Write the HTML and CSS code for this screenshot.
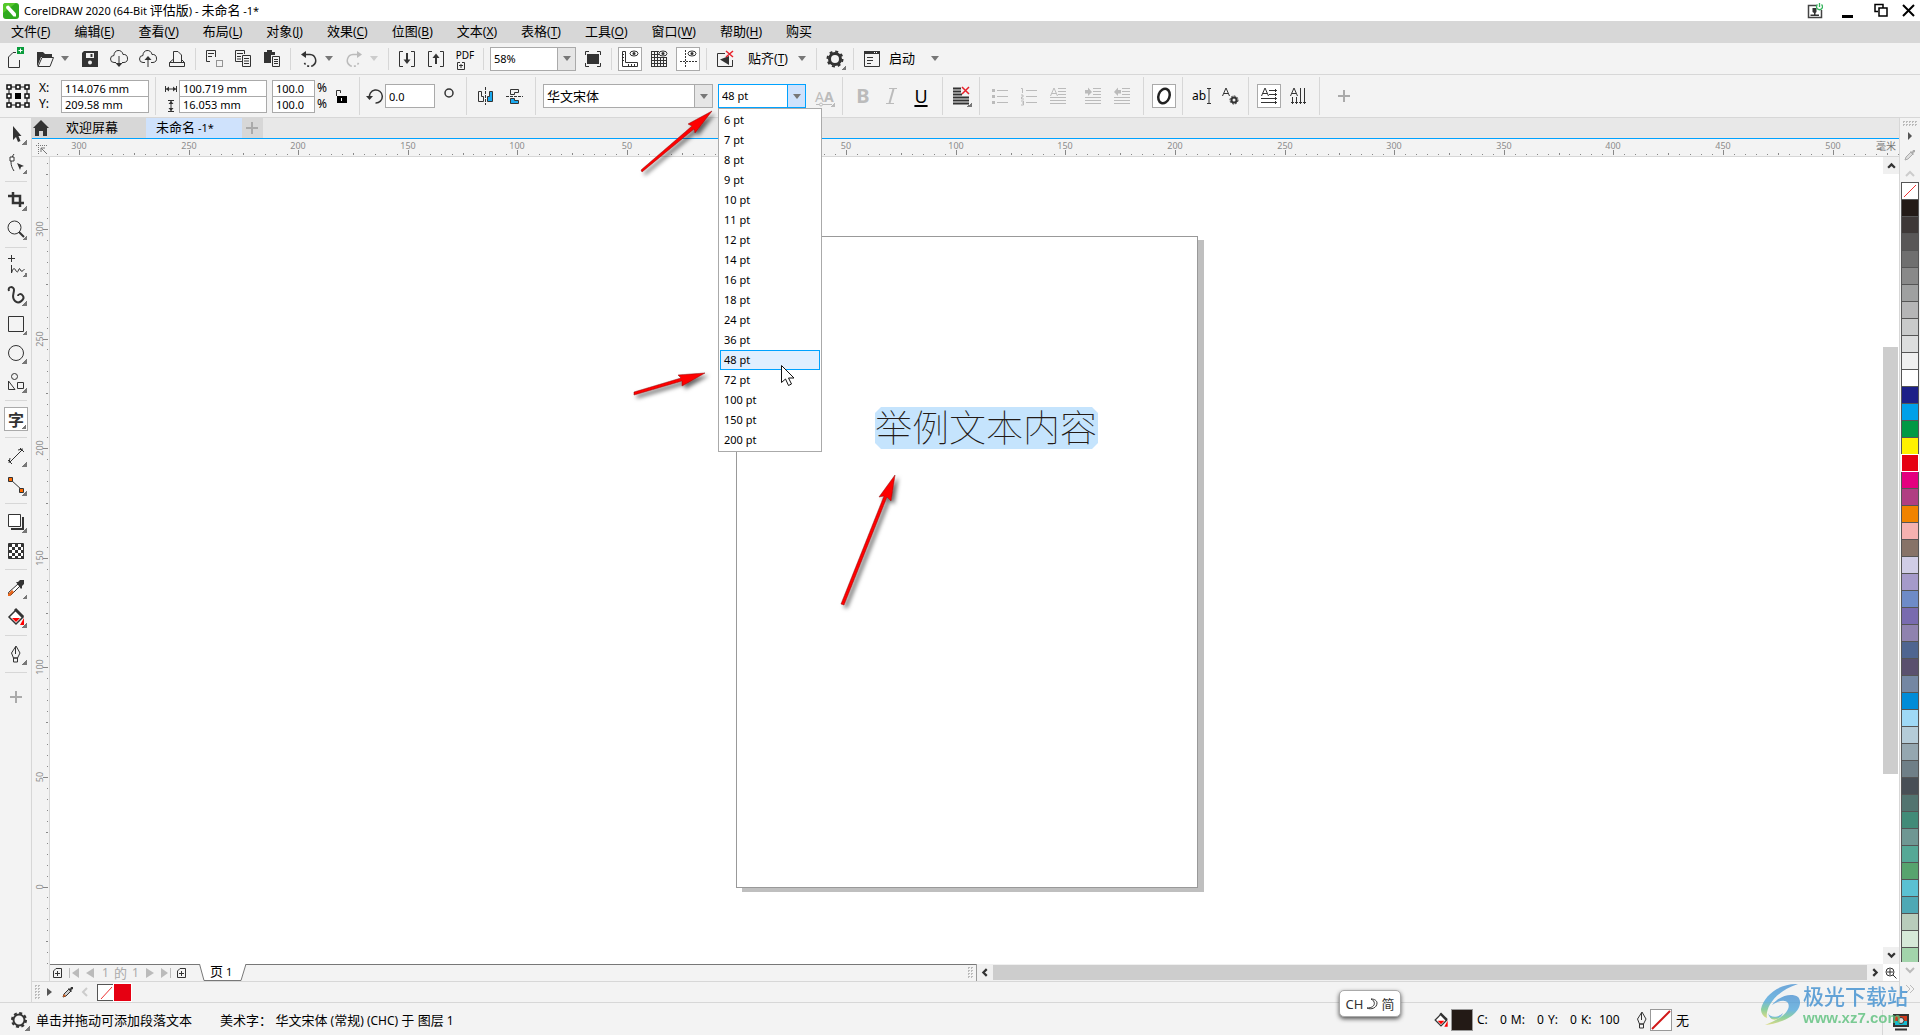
FILE: index.html
```html
<!DOCTYPE html>
<html lang="zh-CN">
<head>
<meta charset="utf-8">
<title>CorelDRAW 2020 (64-Bit 评估版) - 未命名 -1*</title>
<link rel="stylesheet" href="styles.css">
</head>
<body>
<header class="titlebar">
  <svg class="app-logo" viewBox="0 0 16 16"><rect width="16" height="16" rx="3" fill="#2faa1e"/><path d="M0 10V3a3 3 0 0 1 3-3h10z" fill="#55c82a"/><path d="M3.500 3l2-.5L13 10.500v3h-2.500L3 5z" fill="#fff"/></svg>
  <h1 class="title">CorelDRAW 2020 (64-Bit <span class="zh">评估版</span>) - <span class="zh">未命名</span> -1*</h1>
  <div class="window-buttons">
    <button class="wb" aria-label="账户"><svg viewBox="0 0 16 16"><path d="M10 2.500H1.500v12h13V7" fill="none" stroke="#444" stroke-width="1.500"/><path d="M5.500 5h4v4l-1 1v1.500h3.500V13H3.500v-1.500H7V10L5.500 9z" fill="#333"/><path d="M10.500 1.500a3 3 0 1 0 4 0M12.500 0v4" fill="none" stroke="#35b35c" stroke-width="1.300"/></svg></button>
    <button class="wb" aria-label="最小化"><svg viewBox="0 0 16 16"><path d="M2 12h11v3H2z" fill="#000"/></svg></button>
    <button class="wb" aria-label="还原"><svg viewBox="0 0 16 16"><path d="M5 8.500H2V1.500h8v3M6 5h8v8H6z" fill="none" stroke="#000" stroke-width="1.500"/></svg></button>
    <button class="wb close" aria-label="关闭"><svg viewBox="0 0 16 16"><path d="M2 2l11 11M13 2L2 13" fill="none" stroke="#000" stroke-width="2"/></svg></button>
  </div>
</header>

<nav class="menubar">
  <button><span class="zh">文件</span>(<u>F</u>)</button>
  <button><span class="zh">编辑</span>(<u>E</u>)</button>
  <button><span class="zh">查看</span>(<u>V</u>)</button>
  <button><span class="zh">布局</span>(<u>L</u>)</button>
  <button><span class="zh">对象</span>(<u>J</u>)</button>
  <button><span class="zh">效果</span>(<u>C</u>)</button>
  <button><span class="zh">位图</span>(<u>B</u>)</button>
  <button><span class="zh">文本</span>(<u>X</u>)</button>
  <button><span class="zh">表格</span>(<u>T</u>)</button>
  <button><span class="zh">工具</span>(<u>O</u>)</button>
  <button><span class="zh">窗口</span>(<u>W</u>)</button>
  <button><span class="zh">帮助</span>(<u>H</u>)</button>
  <button><span class="zh">购买</span></button>
</nav>

<div class="toolbar" role="toolbar" aria-label="标准">
  <button class="ib" aria-label="新建"><svg viewBox="0 0 24 24"><path d="M12 5.500H9L4.500 10v10.500h11V13" class="s"/><path d="M13 0h7v7h-7z" fill="#0a9c3c"/><path d="M16.500 1.500v4M14.500 3.500h4" stroke="#fff"/></svg></button>
  <button class="ib" aria-label="打开"><svg viewBox="0 0 24 24"><path d="M4 20V5h6l2 2h7v3H8L4 20" class="f"/><path d="M9 10.500h11.500L17 19.500H5z" fill="#f3f3f3" stroke="#333"/></svg></button>
  <button class="caret" aria-label="最近的文档"></button>
  <button class="ib" aria-label="保存"><svg viewBox="0 0 24 24"><path d="M4 6l2-2h14v16H4z" class="f"/><path d="M8 6h8v5H8z" fill="#f3f3f3"/><path d="M13.500 7v3" class="s2"/><circle cx="12" cy="15.500" r="2" fill="#f3f3f3"/></svg></button>
  <button class="ib" aria-label="从云下载"><svg viewBox="0 0 24 24"><path d="M9 15.500H7a3.500 3.500 0 0 1 0-7 4.500 4.500 0 0 1 9-1 4 4 0 0 1 1 8h-2M12 9v10" class="s"/><path d="M8.500 16h7L12 20z" class="f"/></svg></button>
  <button class="ib" aria-label="上传到云"><svg viewBox="0 0 24 24"><path d="M9 15.500H7a3.500 3.500 0 0 1 0-7 4.500 4.500 0 0 1 9-1 4 4 0 0 1 1 8h-2M12 12v8" class="s"/><path d="M8.500 13h7L12 9z" class="f"/></svg></button>
  <button class="ib" aria-label="打印"><svg viewBox="0 0 24 24"><path d="M8.500 15V4.500H13l3.500 3.500v7M8 12.500l-3.500 3v4h15v-4l-3-3M4.500 15.500h15" class="s"/></svg></button>
  <i class="sep"></i>
  <button class="ib" aria-label="剪切"><svg viewBox="0 0 24 24"><path d="M8 14.500H4.500v-11h9V10M6 6.500h6M6 9.500h4" class="s"/><path d="M14.500 13.500h6v6h-6z" class="s" stroke-dasharray="1 1"/></svg></button>
  <button class="ib" aria-label="复制"><svg viewBox="0 0 24 24"><path d="M11 14.500H4.500v-11h9V7M6 6.500h6M6 9.500h4M6 12h4M11.500 8.500h8v11h-8zM13 11.500h5M13 14h5M13 16.500h5" class="s"/></svg></button>
  <button class="ib" aria-label="粘贴"><svg viewBox="0 0 24 24"><path d="M4 5h3V3h5v2h3v3h-4v8H4z" class="f"/><path d="M12.500 9.500h7v10h-7zM14 12.500h4M14 14.500h4M14 16.500h4" class="s"/></svg></button>
  <i class="sep"></i>
  <button class="ib" aria-label="撤消"><svg viewBox="0 0 24 24"><path d="M8 7.500h5a6 6 0 0 1 3 11" class="s15"/><path d="M16 18.500a6 6 0 0 1-9-4" class="s15" stroke-dasharray="2 2"/><path d="M9 4v7L4 7.500z" class="f"/></svg></button>
  <button class="caret" aria-label="撤消列表"></button>
  <button class="ib off" aria-label="重做" disabled><svg viewBox="0 0 24 24"><path d="M16 7.500h-5a6 6 0 0 0-3 11" class="s15"/><path d="M8 18.500a6 6 0 0 0 9-4" class="s15" stroke-dasharray="2 2"/><path d="M15 4v7l5-3.500z" class="f"/></svg></button>
  <button class="caret off" aria-label="重做列表" disabled></button>
  <i class="sep"></i>
  <button class="ib" aria-label="导入"><svg viewBox="0 0 24 24"><path d="M8 4.500H4.500v15H8M16 4.500h3.500v15H16" class="s"/><path d="M12 6v9" class="s2"/><path d="M8.500 12.500h7L12 17z" class="f"/></svg></button>
  <button class="ib" aria-label="导出"><svg viewBox="0 0 24 24"><path d="M8 4.500H4.500v15H8M16 4.500h3.500v15H16" class="s"/><path d="M12 9v8" class="s2"/><path d="M8.500 11h7L12 6.500z" class="f"/></svg></button>
  <button class="ib pdf" aria-label="发布为 PDF"><span>PDF</span><svg viewBox="0 0 24 12"><path d="M7 2.500H4.500v7h7v-7H9" class="s"/><path d="M8 4v4M6 5.500h4" class="s"/></svg></button>
  <i class="sep"></i>
  <div class="combo zoom-combo"><select aria-label="缩放级别"><option>58%</option><option>100%</option></select><i class="arrow"></i></div>
  <button class="ib" aria-label="全屏预览"><svg viewBox="0 0 24 24"><path d="M6 7h12v10H6z" class="f"/><path d="M8 4.500H4.500V8M16 4.500h3.500V8M8 19.500H4.500V16M16 19.500h3.500V16" class="s"/></svg></button>
  <i class="sep"></i>
  <button class="ib on" aria-label="显示标尺"><svg viewBox="0 0 24 24"><path d="M4.500 4.500h3v11h12v4h-15zM5 7.500h1M5 10.500h1M5 13.500h1M10.500 17v2M13.500 17v2M16.500 17v2" class="s"/><ellipse cx="16" cy="6.500" rx="4" ry="2.500" class="s"/><circle cx="16" cy="6.500" r="1.500" class="f"/></svg></button>
  <button class="ib" aria-label="显示网格"><svg viewBox="0 0 24 24"><path d="M4.500 4v16M7.500 4v16M10.500 4v16M13.500 10v10M16.500 10v10M19.500 11v9M4 4.500h8M4 7.500h8M4 10.500h16M4 13.500h16M4 16.500h16M4 19.500h16" class="s"/><ellipse cx="16" cy="6.500" rx="4" ry="2.500" class="s"/><circle cx="16" cy="6.500" r="1.500" class="f"/></svg></button>
  <button class="ib on" aria-label="显示辅助线"><svg viewBox="0 0 24 24"><path d="M9.500 3v18M4 14.500h17" class="s" stroke-dasharray="2 1"/><ellipse cx="16" cy="6.500" rx="4" ry="2.500" class="s"/><circle cx="16" cy="6.500" r="1.500" class="f"/></svg></button>
  <i class="sep"></i>
  <button class="ib" aria-label="贴齐关闭"><svg viewBox="0 0 24 24"><path d="M12 6.500H4.500v13h15V13" class="s"/><path d="M16 9v9l-9-5.500z" class="f"/><path d="M13 4l7 6M20 4l-7 6" stroke="#e8202a" stroke-width="1.500"/></svg></button>
  <button class="text-btn snap"><span class="zh">贴齐</span>(<u>T</u>)</button>
  <button class="caret" aria-label="贴齐选项"></button>
  <i class="sep"></i>
  <button class="ib fly" aria-label="选项"><svg viewBox="0 0 24 24"><circle cx="12" cy="12" r="5.500" fill="none" stroke="#333" stroke-width="3"/><circle cx="12" cy="12" r="7.500" fill="none" stroke="#333" stroke-width="2" stroke-dasharray="3 2.890"/></svg></button>
  <i class="sep"></i>
  <button class="ib" aria-label="启动窗口"><svg viewBox="0 0 24 24"><path d="M4.500 4.500h15v15h-15z" class="s"/><path d="M4 4h16v3H4z" class="f"/><path d="M14 5.500h4" stroke="#fff" stroke-dasharray="1 1"/><path d="M7 10.500h6M7 13.500h6M7 16.500h4" class="s"/></svg></button>
  <button class="text-btn launch"><span class="zh">启动</span></button>
  <button class="caret" aria-label="启动列表"></button>
</div>

<div class="toolbar props" role="toolbar" aria-label="属性栏">
  <button class="ib origin" aria-label="对象原点"><svg viewBox="0 0 26 26"><path d="M4 4h18v18H4z" fill="none" stroke="#111"/><g fill="#fff" stroke="#111" stroke-width="1.500"><path d="M2 2h4v4H2zM11 2h4v4h-4zM20 2h4v4h-4zM2 11h4v4H2zM20 11h4v4h-4zM2 20h4v4H2zM11 20h4v4h-4zM20 20h4v4h-4z"/></g><path d="M10 10h6v6h-6z"/></svg></button>
  <div class="labels"><label for="x">X:</label><label for="y">Y:</label></div>
  <div class="pair"><input id="x" value="114.076 mm"><input id="y" value="209.58 mm"></div>
  <i class="sep"></i>
  <div class="dims">
    <svg viewBox="0 0 14 33"><path d="M1.500 6v6M12.500 6v6M2 9h10M4 20.500h6M4 31.500h6M7 21v10" stroke="#333" fill="none"/><path d="M2 9l3-2.500v5zM12 9L9 6.500v5zM7 21l2.500 3h-5zM7 31l2.500-3h-5z" class="f"/></svg>
  </div>
  <div class="pair"><input aria-label="宽度" value="100.719 mm"><input aria-label="高度" value="16.053 mm"></div>
  <div class="pair narrow"><input aria-label="水平缩放" value="100.0"><input aria-label="垂直缩放" value="100.0"></div>
  <div class="labels percent"><span>%</span><span>%</span></div>
  <button class="ib lock" aria-label="锁定比率"><svg viewBox="0 0 24 24"><path d="M7.500 12V6.500h4V9" class="s"/><path d="M8 12h10v7H8z" fill="#000"/><path d="M12.500 14v3" stroke="#fff"/></svg></button>
  <i class="sep"></i>
  <label class="rotate" for="rot"><svg viewBox="0 0 18 18"><path d="M3.500 11a6.500 6.500 0 1 1 6 5" class="s15"/><path d="M0 9h7l-3.500 4z" class="f"/></svg></label>
  <input id="rot" class="rot" value="0.0">
  <svg class="degree" viewBox="0 0 10 10"><circle cx="5" cy="5" r="4" class="s15"/></svg>
  <i class="sep"></i>
  <button class="ib" aria-label="水平镜像"><svg viewBox="0 0 24 24"><path d="M12.500 3v18" class="s" stroke-dasharray="3 1"/><path d="M5.500 7.500h3v5h2v5h-5z" class="s"/><path d="M19.500 7.500h-3v5h-2v5h5z" fill="#1ba9ee" stroke="#333"/></svg></button>
  <button class="ib" aria-label="垂直镜像"><svg viewBox="0 0 24 24"><path d="M4 12.500h17" class="s" stroke-dasharray="3 1"/><path d="M8.500 10.500v-5h8v3h-4v2z" class="s"/><path d="M8.500 14.500h4v2h4v3h-8z" fill="#1ba9ee" stroke="#333"/></svg></button>
  <i class="sep m3"></i>
  <div class="combo font-combo"><select class="zh" aria-label="字体"><option>华文宋体</option></select><i class="arrow"></i></div>
  <div class="combo size-combo open"><select aria-label="字体大小"><option>48 pt</option></select><i class="arrow"></i>
    <ul class="size-list" role="listbox">
      <li>6 pt</li><li>7 pt</li><li>8 pt</li><li>9 pt</li><li>10 pt</li><li>11 pt</li><li>12 pt</li><li>14 pt</li><li>16 pt</li><li>18 pt</li><li>24 pt</li><li>36 pt</li><li class="hover">48 pt</li><li>72 pt</li><li>100 pt</li><li>150 pt</li><li>200 pt</li>
    </ul>
  </div>
  <button class="ib off fly" aria-label="可变字体" disabled><span class="aa">A<b>A</b></span><svg class="aa-line" viewBox="0 0 24 6"><path d="M4 3.500h16" class="s"/><circle cx="9" cy="3.500" r="1.500" fill="#f3f3f3" stroke="#bbb"/></svg></button>
  <i class="sep"></i>
  <button class="ib off glyph m2" disabled><b>B</b></button>
  <button class="ib off glyph" aria-label="斜体" disabled><svg viewBox="0 0 24 24"><path d="M9 4.500h8M6 19.500h8" class="s"/><path d="M13.500 5l-4 14" class="s2"/></svg></button>
  <button class="ib glyph underline">U</button>
  <i class="sep m3"></i>
  <button class="ib fly" aria-label="文本对齐"><svg viewBox="0 0 24 24"><path d="M4 4.500h8M4 7.500h8M4 10.500h9M4 13.500h16M4 16.500h16M4 19.500h16" class="s2"/><path d="M13 3l7 7M20 3l-7 7" stroke="#e8202a" stroke-width="1.500"/></svg></button>
  <i class="sep"></i>
  <button class="ib off m2" aria-label="项目符号列表" disabled><svg viewBox="0 0 24 24"><path d="M4 5h3v3H4zM4 11h3v3H4zM4 17h3v3H4z" class="f"/><path d="M9 6.500h11M9 12.500h11M9 18.500h11" class="s"/></svg></button>
  <button class="ib off" aria-label="编号列表" disabled><svg viewBox="0 0 24 24"><path d="M4 4.500h1.500V9M4 11h2v2H4.500v2H7M4 17h2.500v4H4M5 19h1M9 6.500h11M9 12.500h11M9 18.500h11" class="s"/></svg></button>
  <button class="ib off" aria-label="首字下沉" disabled><svg viewBox="0 0 24 24"><path d="M4.500 12L8 4l3.500 8M6 9.500h4M12 4.500h8M12 7.500h8M12 10.500h8M4 13.500h16M4 16.500h16M4 19.500h16" class="s"/></svg></button>
  <button class="ib off m8" aria-label="增加缩进" disabled><svg viewBox="0 0 24 24"><path d="M4 6h3V3.500L11 8l-4 4v-2.500H4z" class="f"/><path d="M12 4.500h8M12 7.500h8M12 10.500h8M4 13.500h16M4 16.500h16M4 19.500h16" class="s"/></svg></button>
  <button class="ib off" aria-label="减少缩进" disabled><svg viewBox="0 0 24 24"><path d="M11 6H8V3.500L4 8l4 4v-2.500h3z" class="f"/><path d="M12 4.500h8M12 7.500h8M12 10.500h8M4 13.500h16M4 16.500h16M4 19.500h16" class="s"/></svg></button>
  <i class="sep m3"></i>
  <button class="ib on m2" aria-label="交互式 OpenType"><svg viewBox="0 0 24 24"><ellipse cx="12" cy="12" rx="5.500" ry="7.500" fill="none" stroke="#222" stroke-width="2.500" transform="rotate(20 12 12)"/></svg></button>
  <i class="sep"></i>
  <button class="ib word" aria-label="编辑文本">ab<svg viewBox="0 0 4 16"><path d="M0 .500h4M2 1v14M0 15.500h4" class="s"/></svg></button>
  <button class="ib" aria-label="文本属性"><svg viewBox="0 0 24 24"><path d="M4.500 12L8 4l3.500 8M6 9.500h4" class="s"/><circle cx="16" cy="16" r="2.500" fill="none" stroke="#333" stroke-width="2"/><circle cx="16" cy="16" r="4" fill="none" stroke="#333" stroke-dasharray="2 1"/></svg></button>
  <i class="sep"></i>
  <button class="ib on m2" aria-label="水平方向文本"><svg viewBox="0 0 24 24"><path d="M4.500 12L8 4l3.500 8M6 9.500h4M12 6.500h8M12 10.500h8M4 14.500h16M4 18.500h16" class="s"/><path d="M18.500 5v3M18.500 9v3M18.500 13v3M18.500 17v3" class="s"/></svg></button>
  <button class="ib" aria-label="垂直方向文本"><svg viewBox="0 0 24 24"><path d="M4.500 12L8 4l3.500 8M6 9.500h4M6.500 13v7M10.500 13v7M14.500 4v16M18.500 4v16M5 18.500h3M9 18.500h3M13 18.500h3M17 18.500h3" class="s"/></svg></button>
  <i class="sep m3"></i>
  <button class="ib off m8" aria-label="自定义"><svg viewBox="0 0 24 24"><path d="M12 6v12M6 12h12" stroke="#aaa" stroke-width="2"/></svg></button>
</div>

<main class="main">
  <aside class="toolbox" role="toolbar" aria-label="工具箱">
    <button class="ib fly" aria-label="选择工具"><svg viewBox="0 0 24 24"><path d="M9 4v14l3-3 2 5 2.500-1-2-5h3z" class="f"/></svg></button>
    <button class="ib fly" aria-label="形状工具"><svg viewBox="0 0 24 24"><path d="M10 3C6 8 6 14 10 20" class="s"/><path d="M6 6h4v4H6z" fill="#fff" stroke="#333"/><path d="M13 12l7 3-3 1-1 3z" class="f"/></svg></button>
    <i class="hsep"></i>
    <button class="ib fly" aria-label="裁剪工具"><svg viewBox="0 0 24 24"><path d="M4 8h12v11M9 4v11h11" fill="none" stroke="#333" stroke-width="2.500"/></svg></button>
    <button class="ib fly" aria-label="缩放工具"><svg viewBox="0 0 24 24"><circle cx="10.500" cy="10.500" r="6.500" class="s"/><path d="M15 15l5 5" class="s2"/></svg></button>
    <i class="hsep"></i>
    <button class="ib fly" aria-label="手绘工具"><svg viewBox="0 0 24 24"><path d="M7.500 1v7M4 4.500h7M7.500 11v8q2-7 4-3t3 0q1-3 2 0t4-1" class="s"/></svg></button>
    <button class="ib fly" aria-label="艺术笔工具"><svg viewBox="0 0 24 24"><path d="M5 8C3 3 10 3 10 7S7 14 11 18s10-2 8-5-5-2-5 0" class="s2"/></svg></button>
    <button class="ib fly" aria-label="矩形工具"><svg viewBox="0 0 24 24"><path d="M4.500 4.500h15v15h-15z" class="s"/></svg></button>
    <button class="ib fly" aria-label="椭圆形工具"><svg viewBox="0 0 24 24"><circle cx="12" cy="12" r="7.500" class="s"/></svg></button>
    <button class="ib fly" aria-label="多边形工具"><svg viewBox="0 0 24 24"><circle cx="10.500" cy="6.500" r="3" class="s"/><path d="M4.500 11v8.500H11zM13.500 12.500h6v6h-6z" class="s"/></svg></button>
    <i class="hsep"></i>
    <button class="ib on fly type" aria-label="文本工具">字</button>
    <i class="hsep"></i>
    <button class="ib fly" aria-label="平行度量工具"><svg viewBox="0 0 24 24"><path d="M6 18L18 6M4 16l4 4M16 4l4 4M5 19l1-5M19 5l-5 1" class="s"/></svg></button>
    <button class="ib fly" aria-label="连接器工具"><svg viewBox="0 0 24 24"><path d="M7 7l11 10" class="s"/><path d="M4.500 4.500h4v4h-4zM15.500 15.500h4v4h-4z" fill="#ff6a00" stroke="#333"/></svg></button>
    <i class="hsep"></i>
    <button class="ib fly" aria-label="阴影工具"><svg viewBox="0 0 24 24"><path d="M19 7v12H7" fill="none" stroke="#333" stroke-width="2"/><path d="M4.500 4.500h12v12h-12z" fill="#fff" stroke="#333"/></svg></button>
    <button class="ib" aria-label="透明度工具"><svg viewBox="0 0 24 24"><path d="M4.500 4.500h15v15h-15z" fill="#fff" stroke="#333"/><path d="M5 6.500h15M8 9.500h12M5 12.500h15M8 15.500h12M5 18.500h15" stroke="#333" stroke-width="3" stroke-dasharray="3 3"/></svg></button>
    <i class="hsep"></i>
    <button class="ib fly" aria-label="颜色滴管工具"><svg viewBox="0 0 24 24"><path d="M14 8l2 2-9 9H4.500v-2.500z" fill="#fff" stroke="#333"/><path d="M8 14l2 2-4 4H4v-2z" fill="#e8661c"/><path d="M12 6l2 0 2-2h4v4l-2 2v2l-1 1z" class="f"/></svg></button>
    <button class="ib fly" aria-label="交互式填充工具"><svg viewBox="0 0 24 24"><path d="M12 5l7 7-7 7-7-7z" fill="#fff" stroke="#333" stroke-width="1.500"/><path d="M11 4l8 8" stroke="#333" stroke-width="3"/><path d="M8 13h8l-4 4zM20 13v7h-4z" fill="#f00"/></svg></button>
    <i class="hsep"></i>
    <button class="ib fly" aria-label="轮廓笔"><svg viewBox="0 0 24 24"><path d="M12 4l4 7-2.500 5h-4L7.500 11zM9.500 16h4v4h-4zM11.500 5v7" class="s"/></svg></button>
    <i class="hsep"></i>
    <button class="ib off plus" aria-label="自定义"><svg viewBox="0 0 24 24"><path d="M12 6v12M6 12h12" stroke="#aaa" stroke-width="2"/></svg></button>
  </aside>

  <section class="work">
    <div class="tabs" role="tablist">
      <button class="home" aria-label="主页"><svg viewBox="0 0 16 16"><path d="M8 0l8 8h-2v8h-4v-5H6v5H2V8H0z" class="f"/></svg></button>
      <button class="tab" role="tab"><span class="zh">欢迎屏幕</span></button>
      <button class="tab active" role="tab"><span class="zh">未命名</span> -1*</button>
      <button class="add" aria-label="新建文档"><svg viewBox="0 0 12 12"><path d="M6 0v12M0 6h12" stroke="#aaa" stroke-width="2"/></svg></button>
    </div>
    <div class="ruler-row">
      <div class="corner"><svg viewBox="0 0 12 12"><path d="M0 2.500h12M2.500 0v12" stroke="#777" stroke-dasharray="1 1"/><path d="M5 5l6 6M5 9V5h4" fill="none" stroke="#777"/></svg></div>
      <svg class="hruler" id="hruler"></svg>
      <span class="unit">毫米</span>
    </div>
    <div class="stage">
      <svg class="vruler" id="vruler"></svg>
      <div class="canvas">
        <div class="page"></div>
        <div class="art-text">举例文本内容</div>
      </div>
      <div class="vscroll">
        <button aria-label="向上"><svg viewBox="0 0 8 8"><path d="M1 6l3-3 3 3" class="s2"/></svg></button>
        <i class="gap"></i><i class="thumb"></i><i class="gap"></i>
        <button aria-label="向下"><svg viewBox="0 0 8 8"><path d="M1 2l3 3 3-3" class="s2"/></svg></button>
      </div>
    </div>
    <div class="bottom">
      <span class="ruler-foot"></span>
      <div class="pages">
        <button class="pg" aria-label="添加页"><svg viewBox="0 0 12 12"><path d="M4 1.500h5.500v9h-8V4zM5.500 4v5M3 6.500h5" class="s"/></svg></button>
        <button class="pg off" aria-label="首页"><svg viewBox="0 0 12 12"><path d="M1.500 1v10" class="s"/><path d="M11 1v10L4 6z" class="f"/></svg></button>
        <button class="pg off" aria-label="上一页"><svg viewBox="0 0 12 12"><path d="M10 1v10L2 6z" class="f"/></svg></button>
        <span class="count">1 <span class="zh">的</span> 1</span>
        <button class="pg off" aria-label="下一页"><svg viewBox="0 0 12 12"><path d="M2 1v10l8-5z" class="f"/></svg></button>
        <button class="pg off" aria-label="末页"><svg viewBox="0 0 12 12"><path d="M10.500 1v10" class="s"/><path d="M1 1v10l7-5z" class="f"/></svg></button>
        <button class="pg" aria-label="在后面添加页"><svg viewBox="0 0 12 12"><path d="M4 1.500h5.500v9h-8V4zM5.500 4v5M3 6.500h5" class="s"/></svg></button>
        <button class="page-tab"><svg viewBox="0 0 48 18"><path d="M0 0h47v1l-5 15.500H5L.500.500V0" fill="#fff"/><path d="M.500 0L5 16.500h37L47 0" fill="none" stroke="#777"/></svg><span><span class="zh">页</span> 1</span></button>
        <i class="grip"></i>
      </div>
      <div class="hscroll">
        <button aria-label="向左"><svg viewBox="0 0 8 8"><path d="M6 1L3 4l3 3" class="s2"/></svg></button>
        <i class="thumb"></i>
        <button aria-label="向右"><svg viewBox="0 0 8 8"><path d="M2 1l3 3-3 3" class="s2"/></svg></button>
      </div>
      <button class="nav" aria-label="导航器"><svg viewBox="0 0 12 12"><circle cx="5" cy="5" r="4" class="s"/><path d="M8 8l3.500 3.500M5 2v6M2 5h6" class="s"/></svg></button>
    </div>
    <div class="doc-palette">
      <i class="grip tall"></i>
      <button aria-label="选项"><svg viewBox="0 0 12 12"><path d="M3 2v8l5-4z" fill="#555"/></svg></button>
      <button class="pick" aria-label="滴管"><svg viewBox="0 0 12 12"><path d="M1 11l1-3 5-5 2 2-5 5z" fill="#ccc" stroke="#333"/><path d="M1 11l1-3 2 2z" fill="#e8661c"/><path d="M6 3l1-1 1 1 1-2h2v2L9 4l1 1-1 1z" class="f"/></svg></button>
      <button aria-label="后退"><svg viewBox="0 0 12 12"><path d="M8 2L4 6l4 4" fill="none" stroke="#ccc" stroke-width="2"/></svg></button>
      <button class="chip none" aria-label="无"><svg viewBox="0 0 16 16"><path d="M3 14L14 2" stroke="#e33"/></svg></button>
      <button class="chip red" aria-label="红"></button>
    </div>
  </section>

  <aside class="palette">
    <i class="grip wide"></i>
    <button aria-label="选项"><svg viewBox="0 0 12 12"><path d="M4 2v8l4-4z" fill="#555"/></svg></button>
    <button aria-label="滴管"><svg viewBox="0 0 12 12"><path d="M1 11l1-3 5-5 2 2-5 5z" fill="#ddd" stroke="#aaa"/><path d="M6 3l1-1 1 1 1-2h2v2L9 4l1 1-1 1z" fill="#aaa"/></svg></button>
    <button class="scroll-up" aria-label="向上滚动"><svg viewBox="0 0 12 12"><path d="M2 8l4-4 4 4" fill="none" stroke="#ccc" stroke-width="2"/></svg></button>
    <div class="swatches" id="swatches"></div>
    <button aria-label="向下滚动"><svg viewBox="0 0 12 12"><path d="M2 4l4 4 4-4" fill="none" stroke="#bbb" stroke-width="2"/></svg></button>
    <button aria-label="展开"><svg viewBox="0 0 12 12"><path d="M2 2l4 4-4 4M6 2l4 4-4 4" fill="none" stroke="#bbb"/></svg></button>
  </aside>
</main>

<footer class="status">
  <button class="ib fly" aria-label="状态选项"><svg viewBox="0 0 24 24"><circle cx="12" cy="12" r="5.500" fill="none" stroke="#333" stroke-width="2"/><circle cx="12" cy="12" r="7" fill="none" stroke="#333" stroke-width="2" stroke-dasharray="3 2.500"/></svg></button>
  <span class="hint zh">单击并拖动可添加段落文本</span>
  <span class="object"><span class="zh">美术字： </span><span class="zh">华文宋体</span> (<span class="zh">常规</span>) (CHC) <span class="zh">于 图层</span> 1</span>
  <div class="colors">
    <svg class="bucket" viewBox="0 0 24 24"><path d="M12 5l7 7-7 7-7-7z" fill="#fff" stroke="#333" stroke-width="1.500"/><path d="M11 4l8 8" stroke="#333" stroke-width="3"/><path d="M8 13h8l-4 4zM20 13v7h-4z" fill="#f00"/></svg>
    <i class="fill-chip"></i>
    <div class="cmyk"><span>C:</span><b>0</b><span>M:</span><b>0</b><span>Y:</span><b>0</b><span>K:</span><b>100</b></div>
    <svg class="pen" viewBox="7 3 10 18"><path d="M12 4l4 7-2.500 5h-4L7.500 11zM9.500 16h4v4h-4zM11.500 5v7" class="s"/></svg>
    <i class="line-chip"><svg viewBox="0 0 20 20"><path d="M1 19L19 1" stroke="#d01818" stroke-width="2"/></svg></i>
    <span class="zh">无</span>
  </div>
  <div class="proof"><svg viewBox="0 0 16 18"><path d="M0 1h16v13H0z" class="f"/><path d="M2 3h12v5H2z" fill="#d33a1c"/><path d="M2 8h12v4H2z" fill="#14b9d0"/><circle cx="8" cy="7.500" r="3" fill="#ddd" stroke="#333"/><path d="M2 16.500h12" class="s2"/></svg></div>
</footer>

<svg class="marks" aria-hidden="true">
  <defs><filter id="sh" x="-20%" y="-20%" width="150%" height="150%"><feDropShadow dx="3" dy="3" stdDeviation="2" flood-color="#000" flood-opacity=".6"/></filter></defs>
  <g fill="#fe0000" stroke="#8a1010" stroke-width=".5" filter="url(#sh)">
    <path d="M641 170l51-44-4-2 24-13-17 22-1-4-52 43z"/>
    <path d="M634 392l47-14-3-3 27-2-23 13v-5l-48 14z"/>
    <path d="M841 604l43-108-5 1 16-22-4 26-4-4-43 108z"/>
  </g>
  <path d="M781.500 365.500v17l4-3.500 3 6.500 3-1.500-3-6h5.500z" fill="#fff" stroke="#111"/>
</svg>

<div class="ime">CH <svg viewBox="0 0 12 12"><path d="M5 1c5 2 5 9-4 9 4 2 10 0 10-5 0-2-2-4-6-4z" fill="none" stroke="#333"/></svg> <span class="zh">简</span></div>

<div class="watermark">
  <svg viewBox="0 0 42 44"><defs><linearGradient id="wm" x1="0" y1="0" x2="0" y2="1"><stop offset="0" stop-color="#4f94d4"/><stop offset=".5" stop-color="#53a9dc"/><stop offset=".75" stop-color="#74c88a"/><stop offset="1" stop-color="#d9d46a"/></linearGradient></defs><path d="M38 1C20 0 4 12 1 26c0 5 3 8 6 9C5 24 16 8 38 1z" fill="url(#wm)"/><path d="M12 22c8-10 20-12 26-8 6 6 0 24-33 28 14-5 27-14 23-22-3-4-10-2-16 2z" fill="url(#wm)"/><path d="M8 30c2 5 10 5 15 0-3 7-12 11-15 0z" fill="url(#wm)"/></svg>
  <div><strong>极光下载站</strong><span>www.xz7.com</span></div>
</div>
<script src="app.js"></script>
</body>
</html>
```
FILE: styles.css
```css
* { box-sizing: border-box; }
body {
  margin: 0;
  height: 100vh;
  display: flex;
  flex-direction: column;
  overflow: hidden;
  position: relative;
  background: #f3f3f3;
  color: #000;
  font: 11px/16px "Noto Sans", "Noto Sans CJK SC", sans-serif;
}
.zh { font-size: 13px; }
button, input, select { font: inherit; color: inherit; margin: 0; padding: 0; border: 0; background: none; border-radius: 0; }
select.zh { font-size: 13px; }
svg { display: block; }
.s { fill: none; stroke: #333; }
.s15 { fill: none; stroke: #333; stroke-width: 1.5; }
.s2 { fill: none; stroke: #333; stroke-width: 2; }
.f { fill: #333; }
.off .s, .off .s15, .off .s2 { stroke: #bbb; }
.off .f { fill: #bbb; }

/* title bar and menu */
.titlebar { height: 21px; flex: none; display: flex; align-items: center; background: #fff; padding-left: 3px; }
.app-logo { width: 16px; height: 16px; }
.title { flex: 1; margin: 0 0 0 5px; font-size: 11px; font-weight: 400; white-space: pre; }
.window-buttons { display: flex; align-items: center; padding-right: 3px; gap: 17px; }
.wb { width: 16px; height: 16px; }
.wb.close { margin-left: -5px; }
.wb svg { width: 16px; height: 16px; }
.menubar { height: 22px; flex: none; display: flex; align-items: center; gap: 24px; padding: 0 0 2px 11px; background: #d7d7d7; font-size: 12px; white-space: nowrap; }
.menubar u, .text-btn u { text-underline-offset: 2px; }

/* toolbars */
.toolbar { height: 32px; flex: none; display: flex; align-items: center; padding-left: 2px; border-bottom: 1px solid #d7d7d7; white-space: nowrap; }
.props { height: 43px; padding-left: 3px; }
.ib { position: relative; flex: none; width: 24px; height: 24px; margin: 0 3px 0 2px; }
.ib svg { width: 24px; height: 24px; }
.ib.on { background: #fff; border: 1px solid #aaa; }
.ib.on svg { margin: -1px; }
.fly::after { content: ""; position: absolute; right: 1px; bottom: 1px; width: 5px; height: 5px; background: linear-gradient(135deg, transparent 50%, #777 50%); }
.off.fly::after { background: linear-gradient(135deg, transparent 50%, #bbb 50%); }
.sep { flex: none; width: 1px; height: 22px; margin: 0 4px 0 3px; background: #d7d7d7; }
.props .sep { height: 38px; }
.sep.m3 { margin-left: 6px; }
.ib.m2 { margin-left: 4px; }
.ib.m8 { margin-left: 8px; }
.caret { flex: none; width: 16px; height: 24px; padding-left: 1px; }
.caret::before, .arrow::before { content: ""; display: block; width: 0; border: solid transparent; border-width: 5px 4px 0; border-top-color: #777; }
.caret.off::before { border-top-color: #ccc; }
.pdf { padding-top: 4px; }
.pdf span { display: block; font-size: 10px; line-height: 9px; }
.pdf svg { width: 24px; height: 12px; }
.text-btn.snap { width: 40px; margin: 0 9px 0 8px; text-align: left; font-size: 12px; }
.text-btn.launch { width: 27px; margin: 0 14px 0 2px; text-align: left; }

.combo { position: relative; flex: none; display: flex; height: 24px; background: #fff; border: 1px solid #aaa; }
.combo select { flex: 1; min-width: 0; padding-left: 3px; appearance: none; outline: 0; }
.arrow { width: 18px; display: flex; align-items: center; justify-content: center; background: #e6e6e6; border-left: 1px solid #aaa; }
.zoom-combo { width: 86px; margin: 0 3px 0 2px; }
.font-combo { width: 170px; margin: 0 5px 0 3px; }
.size-combo { width: 88px; margin-right: 4px; }
.size-combo.open, .size-combo.open .arrow { border-color: #00a2ff; }
.size-combo.open .arrow { background: #cfe2fc; }
.size-list { position: absolute; z-index: 20; top: 23px; left: -1px; width: 104px; margin: 0; padding: 1px; list-style: none; background: #fff; border: 1px solid #aaa; }
.size-list li { height: 20px; padding-left: 4px; line-height: 20px; }
.size-list .hover { padding-left: 3px; line-height: 18px; background: #e0efff; border: 1px solid #00a2ff; }

.origin { width: 26px; height: 26px; }
.origin svg { width: 26px; height: 26px; }
.labels { width: 22px; margin-left: 5px; display: flex; flex-direction: column; font-size: 12px; }
.percent { width: 12px; margin-left: 2px; }
.pair { width: 88px; margin-right: 3px; display: flex; flex-direction: column; }
.pair input { width: 100%; height: 17px; padding-left: 3px; background: #fff; border: 1px solid #aaa; }
.pair input + input { margin-top: -1px; }
.pair.narrow { width: 43px; margin: 0 0 0 2px; }
.dims { width: 19px; padding-left: 4px; }
.dims svg { width: 14px; height: 33px; }
.lock { margin-left: 0; }
.rotate { width: 21px; padding: 0 0 0 2px; }
.rotate svg { width: 18px; height: 18px; }
.rot { width: 50px; height: 24px; padding-left: 3px; background: #fff; border: 1px solid #aaa; }
.degree { width: 10px; height: 10px; margin: 0 9px 6px 9px; }
.aa { display: block; padding-left: 3px; text-align: left; font-size: 14px; line-height: 17px; color: #bbb; }
.aa b { font-weight: 700; }
.ib .aa-line { position: absolute; left: 0; bottom: 1px; height: 6px; }
.glyph { font-size: 20px; line-height: 24px; }
.off.glyph { color: #bbb; }
.underline { text-decoration: underline; text-decoration-thickness: 2px; text-underline-offset: 2px; font-size: 18px; }
.word { display: flex; align-items: center; gap: 1px; padding-left: 3px; font-size: 12px; }
.word svg { width: 4px; height: 16px; }

/* main area */
.main { flex: 1; min-height: 0; display: flex; }
.toolbox { width: 32px; flex: none; display: flex; flex-direction: column; padding: 2px 0 0 2px; border-right: 1px solid #d7d7d7; }
.toolbox .ib { margin: 2px 3px 3px 2px; }
.hsep { flex: none; width: 22px; height: 1px; margin: 3px 0 4px 3px; background: #d7d7d7; }
.toolbox .type { font: 700 16px/22px "Noto Sans CJK SC", sans-serif; color: #333; }
.toolbox .plus { margin-top: 8px; }
.work { flex: 1; min-width: 0; display: flex; flex-direction: column; }
.tabs { height: 21px; flex: none; display: flex; background: #e8e8e8; border-bottom: 1px solid #00a2ff; }
.tabs button { background: #d7d7d7; white-space: pre; }
.tabs .home { width: 18px; padding-left: 1px; }
.home svg { width: 16px; height: 16px; }
.tabs .tab { width: 96px; padding: 0 0 1px 16px; text-align: left; }
.tabs .tab.active { padding-left: 10px; background: #cfe2fc; }
.tabs .add { width: 21px; padding-left: 4px; }
.add svg { width: 12px; height: 12px; }
.ruler-row { position: relative; height: 18px; flex: none; display: flex; border-bottom: 1px solid #d7d7d7; }
.corner { width: 18px; padding: 4px 0 0 4px; }
.corner svg { width: 12px; height: 12px; }
.hruler { flex: 1; min-width: 0; height: 17px; }
.unit { position: absolute; right: 3px; top: 0; font-size: 10px; line-height: 14px; color: #777; background: #f3f3f3; }
.hruler text, .vruler text { font-size: 9px; fill: #8c8c8c; text-anchor: middle; }
.hruler path, .vruler path { stroke: #888; fill: none; shape-rendering: crispEdges; }
.stage { flex: 1; min-height: 0; display: flex; }
.vruler { width: 18px; height: 100%; flex: none; border-right: 1px solid #d7d7d7; }
.canvas { position: relative; flex: 1; background: #fff; overflow: hidden; }
.page { position: absolute; left: 686px; top: 79px; width: 462px; height: 652px; background: #fff; border: 1px solid #999; box-shadow: 6px 4px 0 #bfbfbf; clip-path: inset(0 -6px -4px 0); }
.art-text { position: absolute; left: 825px; top: 250px; width: 223px; height: 42px; font: 100 37px/38px "Noto Sans CJK SC", sans-serif; color: #231a16; white-space: nowrap; background: #c5e4fd; clip-path: polygon(6px 0, 217px 0, 100% 6px, 100% 36px, 217px 100%, 6px 100%, 0 36px, 0 6px); }
.vscroll { width: 16px; flex: none; display: flex; flex-direction: column; background: #fff; }
.vscroll button, .hscroll button { flex: none; display: flex; align-items: center; justify-content: center; width: 16px; height: 17px; background: #f0f0f0; }
.vscroll svg, .hscroll svg { width: 9px; height: 9px; }
.gap { flex: 173; }
.vscroll .thumb { flex: 427; width: 15px; background: #cdcdcd; }

.bottom { height: 18px; flex: none; display: flex; border-bottom: 1px solid #d7d7d7; }
.ruler-foot { width: 18px; flex: none; border-right: 1px solid #d7d7d7; }
.pages { flex: 51 1 0; display: flex; align-items: center; padding-left: 1px; border-top: 1px solid #777; }
.pg { width: 16px; padding-left: 1px; }
.pg svg { width: 12px; height: 12px; }
.count { width: 44px; padding: 0 4px 0 3px; display: flex; justify-content: space-between; color: #aaa; font-size: 12px; }
.page-tab { position: relative; display: flex; width: 48px; height: 18px; margin-left: 8px; }
.page-tab > svg { width: 48px; height: 18px; }
.page-tab > span { position: absolute; left: 11px; top: 0; line-height: 14px; white-space: nowrap; }
.grip { width: 6px; height: 12px; margin: 0 3px 0 auto; background: conic-gradient(#bbb 25%, transparent 0) 0 0 / 3px 3px; }
.grip.tall { width: 6px; height: 15px; margin: 0 4px 0 2px; }
.grip.wide { width: 15px; height: 6px; margin: 0 0 3px 2px; }
.hscroll { flex: 50 1 0; display: flex; background: #f0f0f0; border-left: 1px solid #999; }
.hscroll .thumb { flex: 1; height: 15px; margin: 1px 0; background: #cdcdcd; }
.nav { width: 16px; flex: none; background: #fff; padding-left: 2px; }
.nav svg { width: 12px; height: 12px; }
.doc-palette { height: 20px; flex: none; display: flex; align-items: center; }
.doc-palette button { width: 12px; height: 12px; margin-right: 3px; }
.doc-palette .pick { margin: 0 5px 0 3px; }
.doc-palette .chip { width: 17px; height: 17px; margin: 0; }
.doc-palette .none { margin-left: 3px; background: #fff; border: 1px solid #555; border-right: 0; }
.doc-palette .red { background: #e60012; box-shadow: 0 0 0 1px #fff; }

.palette { width: 21px; flex: none; display: flex; flex-direction: column; padding-top: 3px; border-left: 1px solid #d7d7d7; }
.palette button { flex: none; width: 12px; height: 12px; margin: 0 0 7px 4px; }
.palette .scroll-up { margin-bottom: 2px; }
.swatches { flex: 1; min-height: 0; overflow: hidden; padding-left: 1px; }
.swatches button { display: block; width: 18px; height: 18px; margin: 0 0 -1px; border: 1px solid #555; }
.swatches .picked { position: relative; border-color: #fff; }
.swatches + button { margin-top: 2px; }

/* status bar */
.status { height: 33px; flex: none; display: flex; align-items: center; padding: 2px 0 0 5px; border-top: 1px solid #d7d7d7; font-size: 12px; white-space: nowrap; }
.hint { width: 186px; padding-left: 2px; }
.object { flex: 1; white-space: pre; }
.colors { display: flex; align-items: center; width: 451px; }
.bucket { width: 20px; height: 20px; }
.fill-chip { width: 22px; height: 22px; background: #231a16; border: 1px solid #999; }
.cmyk { display: flex; width: 164px; padding-left: 4px; }
.cmyk b { width: 19px; text-align: right; font-weight: 400; margin-right: 4px; }
.cmyk b:last-child { width: 28px; }
.pen { width: 10px; height: 18px; margin-right: 3px; }
.line-chip { width: 22px; height: 22px; margin-right: 4px; background: #fff; border: 1px solid #999; }
.line-chip svg { width: 20px; height: 20px; }
.proof { height: 25px; padding: 3px 11px 0 10px; margin-top: 4px; border-left: 1px solid #d7d7d7; }
.proof svg { width: 16px; height: 18px; }

/* overlays */
.marks { position: absolute; z-index: 30; inset: 0; width: 100%; height: 100%; pointer-events: none; }
.ime { position: absolute; z-index: 31; right: 519px; bottom: 18px; width: 62px; height: 27px; display: flex; align-items: center; justify-content: center; gap: 3px; font-size: 13px; color: #333; background: #fff; border: 1px solid #aaa; border-radius: 5px; box-shadow: 0 2px 4px #555; }
.ime svg { width: 12px; height: 12px; }
.watermark { position: absolute; z-index: 32; right: 12px; bottom: 8px; display: flex; gap: 1px; opacity: .8; pointer-events: none; }
.watermark > svg { width: 42px; height: 44px; }
.watermark strong { display: block; font-size: 21px; line-height: 26px; font-weight: 500; color: #3f8fd0; }
.watermark span { display: block; font: 700 15px/18px "Liberation Sans", sans-serif; color: #5cc07c; }
```
FILE: app.js
```js
// Rulers: one label every 50 mm, a tick every 5 mm.
const PX_PER_MM = 2.192;
const NS = "http://www.w3.org/2000/svg";

function add(parent, tag, attrs, text) {
  const el = document.createElementNS(NS, tag);
  for (const key in attrs) el.setAttribute(key, attrs[key]);
  if (text !== undefined) el.textContent = text;
  parent.appendChild(el);
}

function drawRuler(svg, origin, length, vertical) {
  const first = Math.ceil(-origin / PX_PER_MM / 5) * 5;
  const last = (length - origin) / PX_PER_MM;
  const end = 16;
  for (let mm = first; mm <= last; mm += 5) {
    const p = Math.floor(origin + mm * PX_PER_MM);
    const size = mm % 50 === 0 ? 5 : mm % 25 === 0 ? 2 : 1;
    add(svg, "path", { d: vertical ? `M${end - size} ${p + 0.5}h${size}` : `M${p + 0.5} ${end - size}v${size}` });
    if (mm % 50 === 0 && p > 12) {
      const pos = vertical ? { transform: `translate(11 ${p}) rotate(-90)` } : { x: p, y: 10 };
      add(svg, "text", pos, Math.abs(mm));
    }
  }
}

const h = document.getElementById("hruler");
const v = document.getElementById("vruler");
drawRuler(h, 687, h.getBoundingClientRect().width, false);
drawRuler(v, 730, v.getBoundingClientRect().height, true);

const COLORS = [
  "#fff", "#231a16", "#3e3837", "#595757", "#6f6f6f", "#898989", "#9fa0a0", "#b5b5b6", "#c9caca", "#dcdddd",
  "#efefef", "#fff", "#1d2088", "#00a0e9", "#009944", "#fff100", "#e60012", "#e4007f", "#b03f82", "#f08300",
  "#f4b1b0", "#877368", "#d0cde6", "#a59aca", "#6e8bc7", "#796baf", "#8f82af", "#4f6590", "#5a506e", "#7487a3",
  "#008cd8", "#9fd9f6", "#b5ccd8", "#95a7b0", "#6f7f87", "#484f56", "#527470", "#428b78", "#6f9793", "#55a896",
  "#57a46e", "#5bc0d2", "#4fa8b5", "#b8ccbb", "#d5e9d8", "#a2d4ab"
];
const box = document.getElementById("swatches");
COLORS.forEach((color, i) => {
  const b = document.createElement("button");
  b.style.background = color;
  b.setAttribute("aria-label", color);
  if (color === "#e60012") b.className = "picked";
  if (i === 0) {
    const svg = document.createElementNS(NS, "svg");
    svg.setAttribute("viewBox", "0 0 16 16");
    add(svg, "path", { d: "M2 14L14 2", stroke: "#e33" });
    b.appendChild(svg);
  }
  box.appendChild(b);
});
```
